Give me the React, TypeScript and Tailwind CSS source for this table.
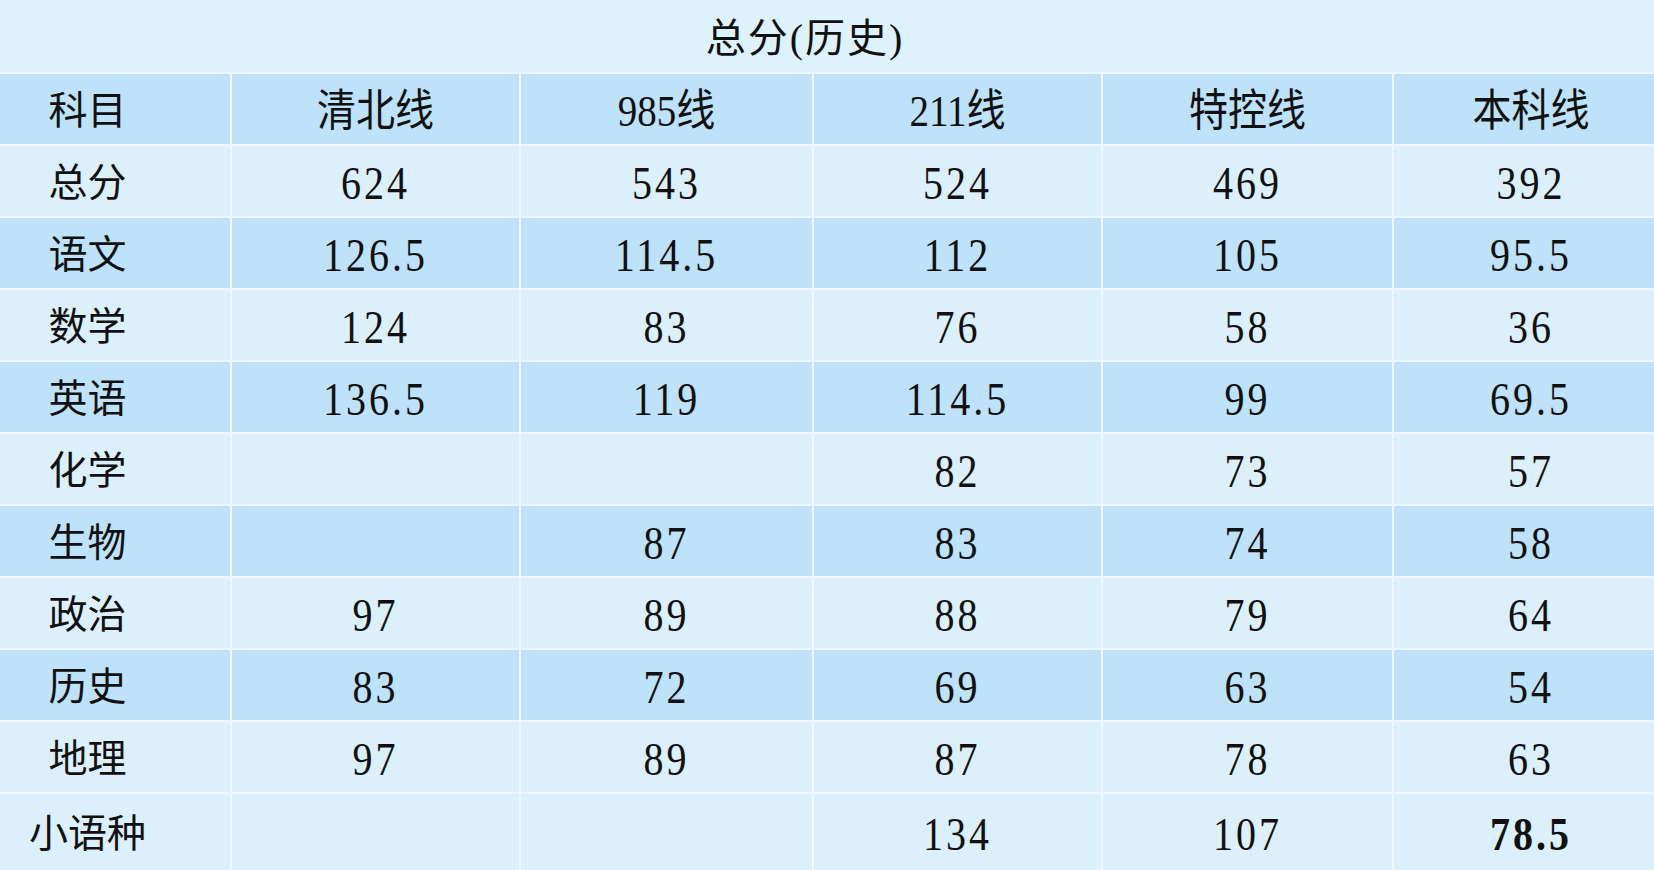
import React from "react";

const headers = ["科目", "清北线", "985线", "211线", "特控线", "本科线"];

const rows: string[][] = [
  ["总分", "624", "543", "524", "469", "392"],
  ["语文", "126.5", "114.5", "112", "105", "95.5"],
  ["数学", "124", "83", "76", "58", "36"],
  ["英语", "136.5", "119", "114.5", "99", "69.5"],
  ["化学", "", "", "82", "73", "57"],
  ["生物", "", "87", "83", "74", "58"],
  ["政治", "97", "89", "88", "79", "64"],
  ["历史", "83", "72", "69", "63", "54"],
  ["地理", "97", "89", "87", "78", "63"],
  ["小语种", "", "", "134", "107", "78.5"],
];

const font = {
  fontFamily: '"Liberation Serif", "Noto Sans CJK SC", serif',
};

const App = () => {
  return (
    <div
      className="w-[1654px] h-[870px] flex flex-col gap-[2px] bg-[#eef8fe] overflow-hidden text-[#111]"
      style={font}
    >
      <div className="h-[72px] shrink-0 bg-[#def2fc] flex items-center justify-center pt-[5px] pr-[44px] text-[40px] tracking-[2px]">
        总分(历史)
      </div>
      {[headers, ...rows].map((row, i) => (
        <div
          key={i}
          className={
            i === 10
              ? "flex-1 grid grid-cols-[230px_287px_291px_287px_289px_1fr] gap-[2px]"
              : "h-[70px] shrink-0 grid grid-cols-[230px_287px_291px_287px_289px_1fr] gap-[2px]"
          }
        >
          {row.map((t, j) => (
            <div
              key={j}
              className={
                (i % 2 === 0 && i < 10 ? "bg-[#bde2f9] " : "bg-[#dcf0fc] ") +
                (j === 5 ? "pl-[14px] " : "") +
                (j === 0
                  ? "flex items-center justify-center pt-[5px] pr-[55px] text-[39px]"
                  : i === 0
                    ? "flex items-center justify-center pt-[5px] text-[39px]"
                    : "flex items-center justify-center pt-[6px] text-[40px] tracking-[3px]")
              }
            >
              <span
                className={
                  i === 10 && j === 5
                    ? "inline-block scale-y-[1.15] font-bold"
                    : j > 0
                      ? "inline-block scale-y-[1.15]"
                      : "inline-block"
                }
              >
                {t}
              </span>
            </div>
          ))}
        </div>
      ))}
    </div>
  );
};

export default App;
